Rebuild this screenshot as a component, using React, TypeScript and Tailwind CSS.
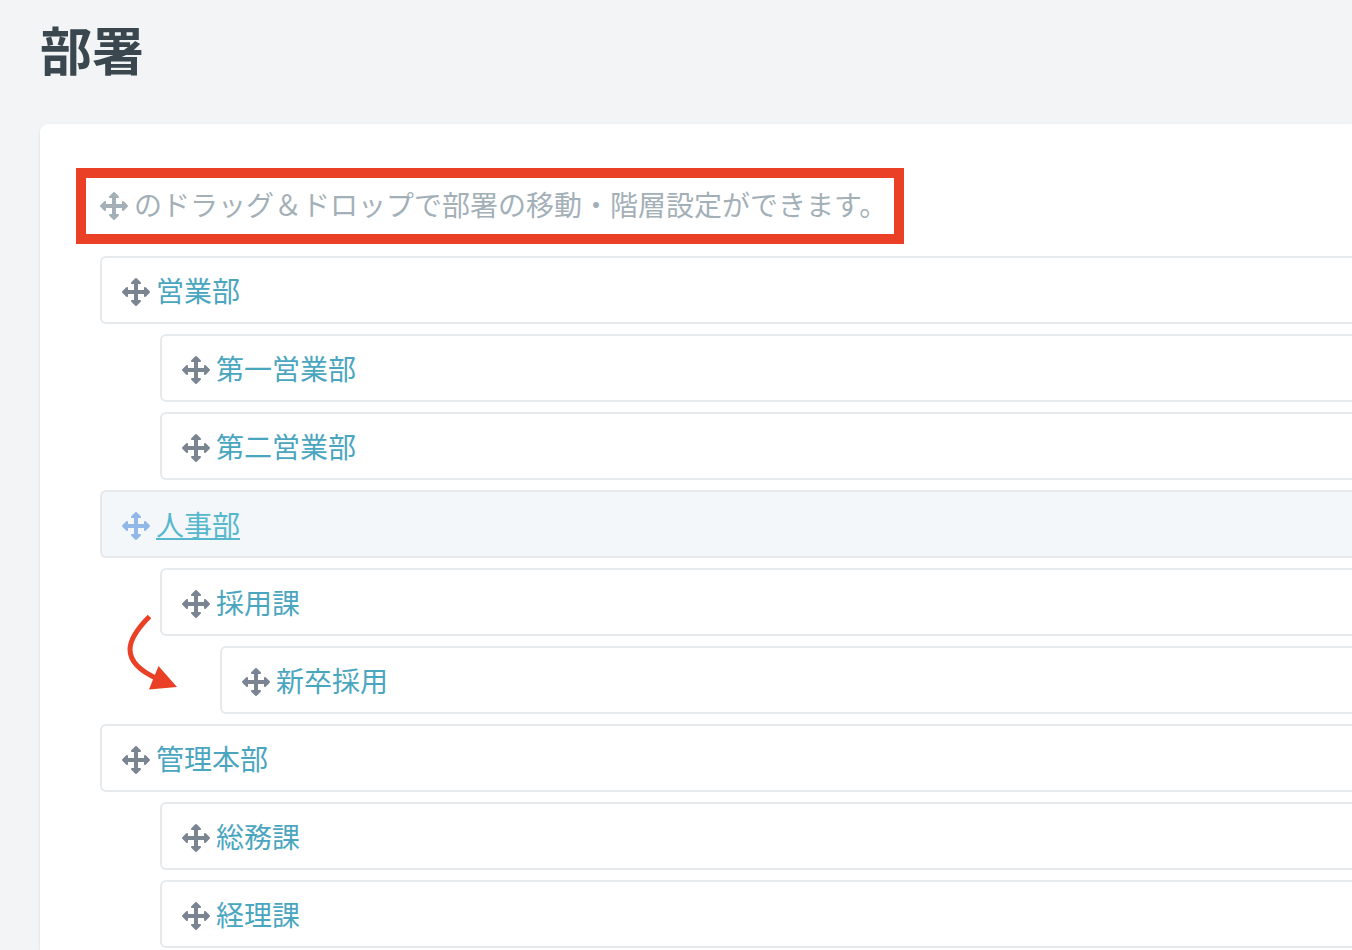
// App.tsx

type Department = {
  id: string;
  name: string;
  active?: boolean;
  showArrow?: boolean;
  children?: Department[];
};

const departments: Department[] = [
  {
    id: "sales",
    name: "営業部",
    children: [
      { id: "sales-1", name: "第一営業部" },
      { id: "sales-2", name: "第二営業部" },
    ],
  },
  {
    id: "hr",
    name: "人事部",
    active: true,
    children: [
      {
        id: "recruiting",
        name: "採用課",
        showArrow: true,
        children: [{ id: "new-grads", name: "新卒採用" }],
      },
    ],
  },
  {
    id: "admin",
    name: "管理本部",
    children: [
      { id: "general-affairs", name: "総務課" },
      { id: "accounting", name: "経理課" },
    ],
  },
];

// Four-way move handle: one arrow head rotated around the centre, plus the cross
function MoveIcon() {
  const head = "M13.3 0.3Q14 -0.3 14.7 0.3L18.7 4.3Q19.3 5 18.9 5.5Q18.6 6 18 6H10Q9.4 6 9.1 5.5Q8.7 5 9.3 4.3Z";
  return (
    <svg className="w-7 h-7 shrink-0" viewBox="0 0 28 28" fill="currentColor" aria-hidden="true">
      <path d="M12 5H16V12H23V16H16V23H12V16H5V12H12Z" />
      <path d={head} />
      <path d={head} transform="rotate(90 14 14)" />
      <path d={head} transform="rotate(180 14 14)" />
      <path d={head} transform="rotate(270 14 14)" />
    </svg>
  );
}

// Curved arrow that points from a parent to its nested child
function NestArrow() {
  return (
    <svg
      className="absolute top-11 -left-9 pointer-events-none"
      width="56"
      height="80"
      viewBox="0 0 56 80"
      fill="none"
      aria-hidden="true"
    >
      <path d="M25.5 4.5C15 15 6 27 6 37.5C6 50 18 60 34 67" stroke="#ea4025" strokeWidth="5" />
      <path d="M34.5 54L53 75L25 77.5Z" fill="#ea4025" />
    </svg>
  );
}

function DepartmentRow({ department }: { department: Department }) {
  const { name, active } = department;
  return (
    <div
      className={`flex items-center gap-1.5 h-[68px] pl-5 border-2 border-r-0 rounded-l-md border-[#e6eaed] ${
        active ? "bg-[#f3f7fa]" : "bg-white"
      }`}
    >
      <button
        type="button"
        aria-label={`${name}を移動`}
        className={`pt-1 cursor-move ${active ? "text-[#92b8e8]" : "text-[#7b8591]"}`}
      >
        <MoveIcon />
      </button>
      <a
        href={`#${department.id}`}
        className={
          active
            ? "text-[#57b8cc] underline decoration-2 underline-offset-2 [text-decoration-skip-ink:none]"
            : "text-[#4aa6bf] hover:underline"
        }
      >
        {name}
      </a>
    </div>
  );
}

function DepartmentList({ items, nested = false }: { items: Department[]; nested?: boolean }) {
  return (
    <ul className={`flex flex-col gap-2.5 ${nested ? "mt-2.5 pl-[60px]" : ""}`}>
      {items.map((item) => (
        <li key={item.id} className="relative">
          <DepartmentRow department={item} />
          {item.showArrow && <NestArrow />}
          {item.children && <DepartmentList items={item.children} nested />}
        </li>
      ))}
    </ul>
  );
}

export default function App() {
  return (
    <div
      lang="ja"
      className="flex flex-col min-h-screen pl-10 bg-[#f2f4f6] text-[28px] leading-10 font-['Noto_Sans_CJK_JP',sans-serif]"
    >
      <h1 className="pt-3.5 pb-10 text-[52px] leading-[70px] font-bold text-[#3b474f]">部署</h1>

      <main className="flex-1 pt-11 pl-9 bg-white rounded-tl-lg shadow-sm">
        <p className="flex items-center gap-1.5 w-fit h-[76px] pl-3.5 pr-[7px] border-10 border-[#ea4025] text-[#a4b0b7]">
          <MoveIcon />
          <span className="pb-1">のドラッグ＆ドロップで部署の移動・階層設定ができます。</span>
        </p>

        <div className="mt-3 pl-6">
          <DepartmentList items={departments} />
        </div>
      </main>
    </div>
  );
}
